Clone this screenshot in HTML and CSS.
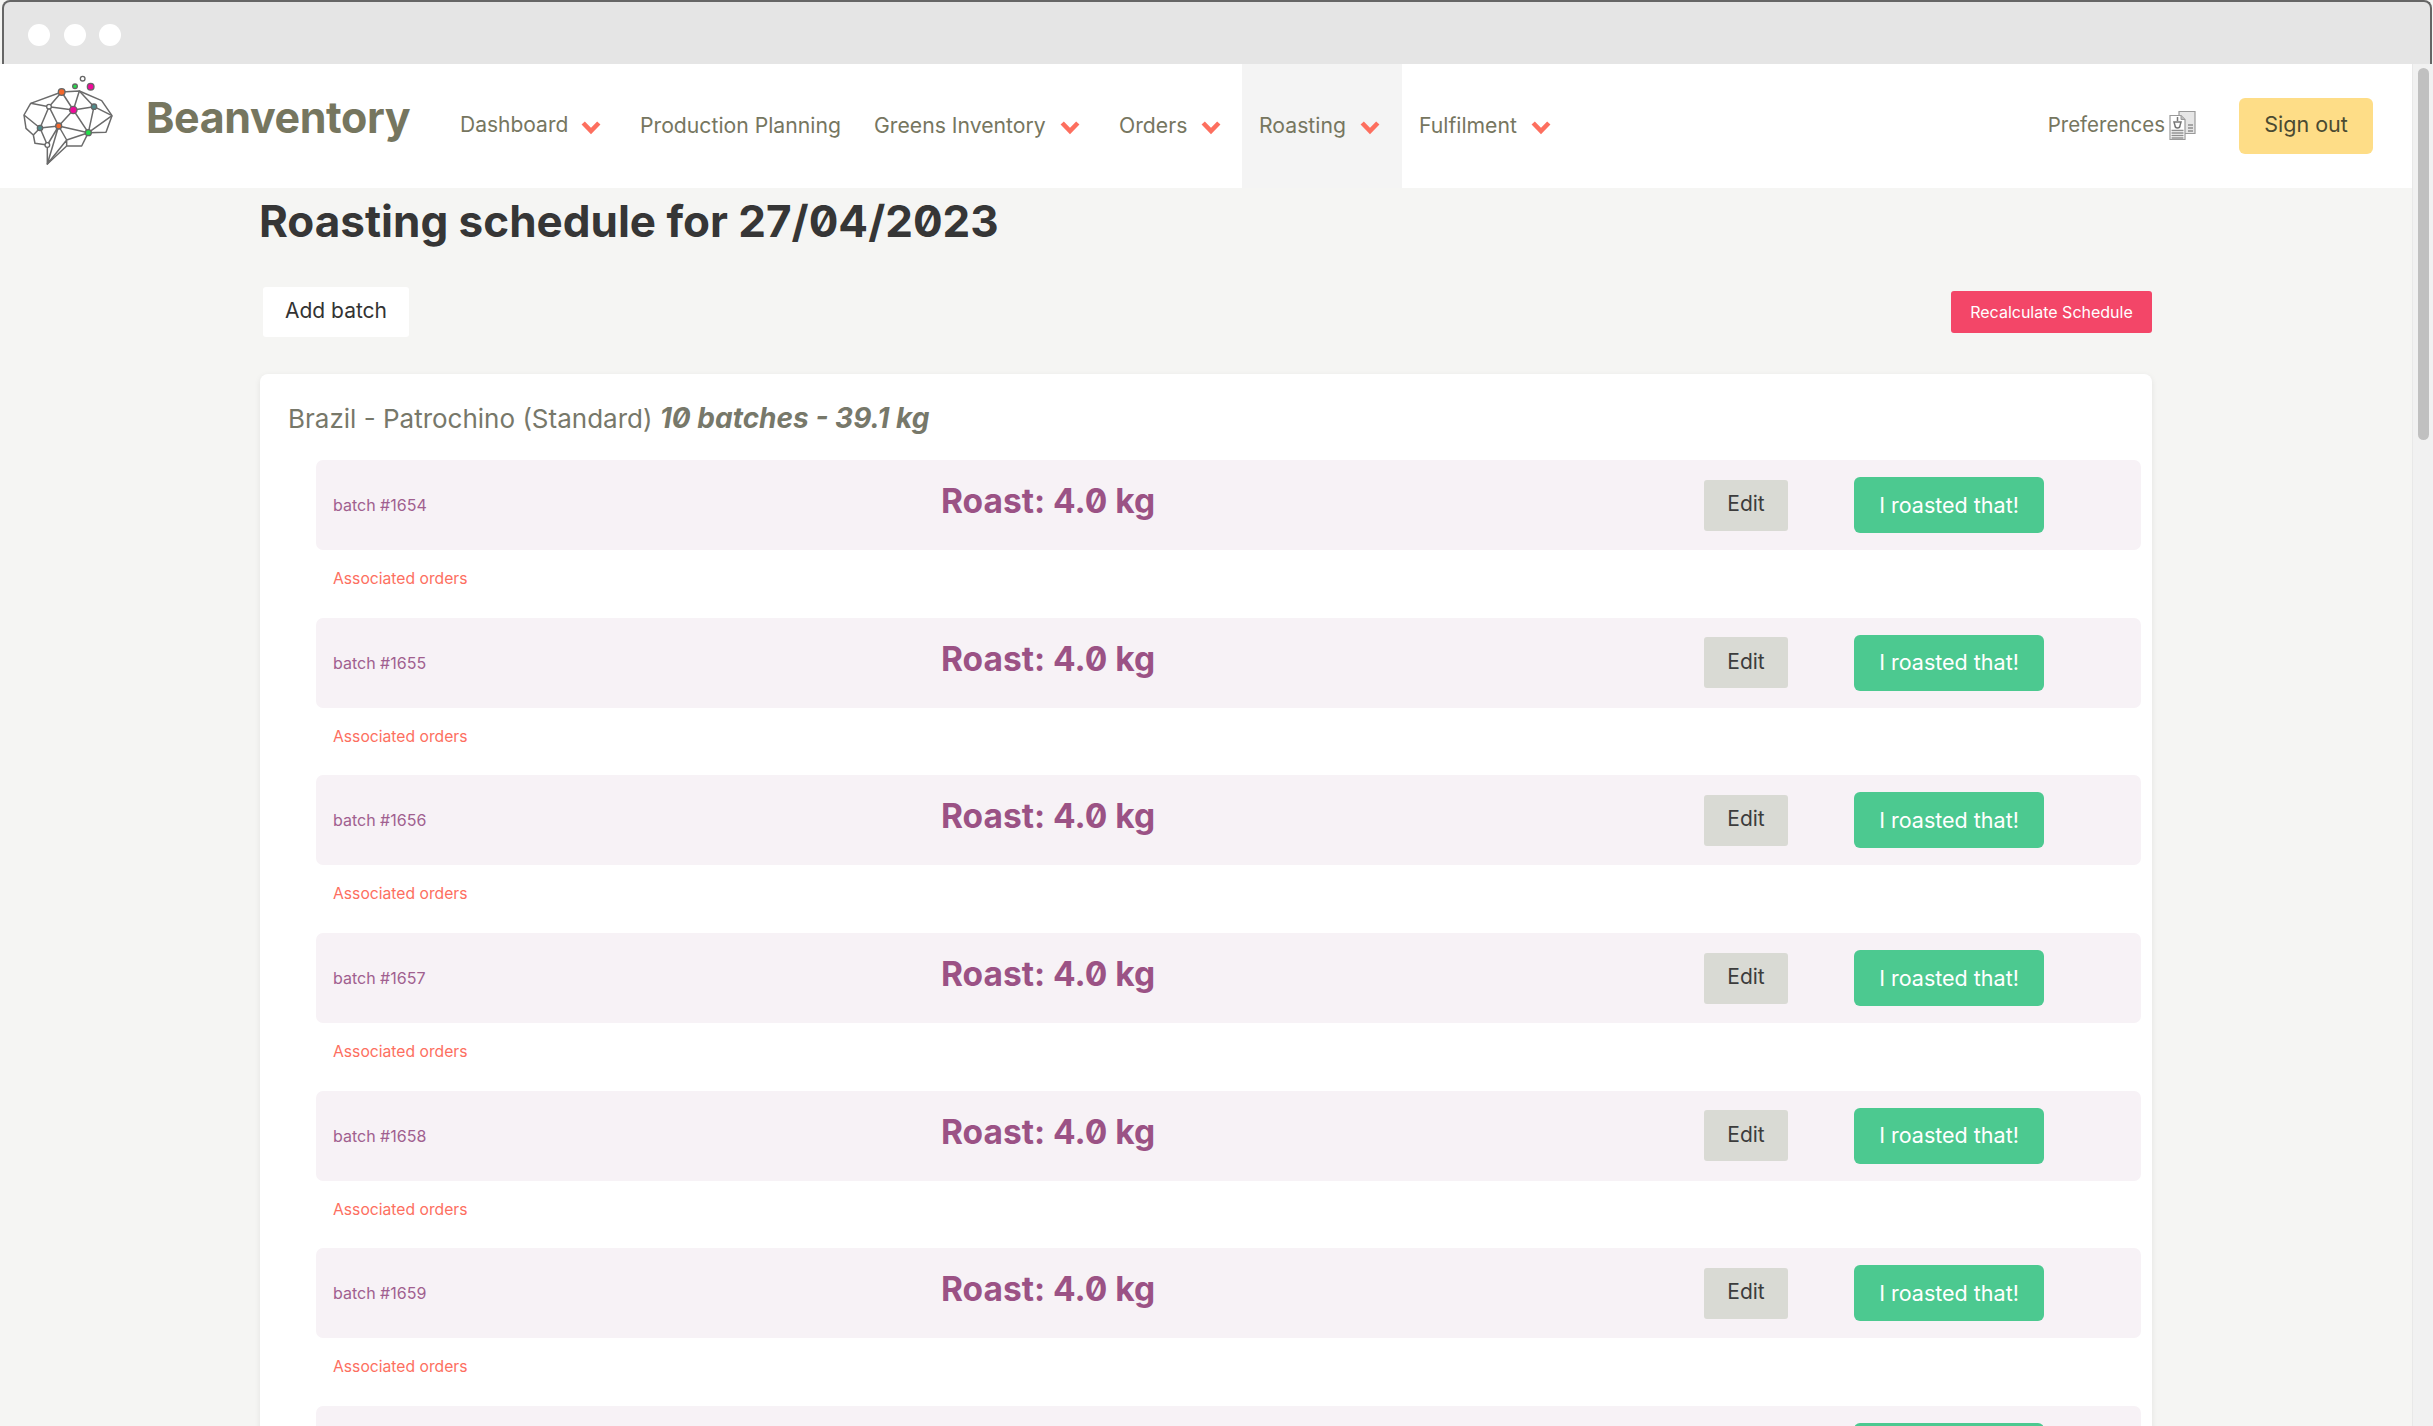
FILE: index.html
```html
<!DOCTYPE html>
<html lang="en">
<head>
<meta charset="utf-8">
<title>Beanventory</title>
<link rel="stylesheet" href="styles.css">
</head>
<body>
<svg class="defs" width="0" height="0" aria-hidden="true"><symbol id="chev" viewBox="0 0 20 15"><path d="M2.200 3 10 11 17.800 3" fill="none" stroke="#fd6f5f" stroke-width="4.600"/></symbol></svg>
<div class="chrome"><span class="dot"></span><span class="dot"></span><span class="dot"></span></div>
<div class="window">
  <div class="page">
    <nav class="nav">
      <a class="brand">
        <svg class="logo" viewBox="0 0 390 330" aria-hidden="true">
          <g fill="none" stroke="#6b6b6b" stroke-width="4.5" stroke-linejoin="round">
            <path d="M92 130 185 96 238 93 305 122 336 167 318 217 265 218 245 258 200 258 142 312 142 255 105 250 100 225 78 205 72 165Z"/>
            <path d="M185 96 147 140 92 130M147 140 220 150 282 140 238 93 220 150 185 96M147 140 120 204 72 165M147 140 176 198 220 150 265 218 282 140 336 167M120 204 176 198 265 218M120 204 100 225M120 204 142 255 176 198 142 312 200 240 265 218M176 198 200 240 200 258M265 218 336 167"/>
          </g>
          <g stroke="#666" stroke-width="4">
            <circle cx="185" cy="96" r="10" fill="#f4682c"/>
            <circle cx="147" cy="140" r="7" fill="#fff"/>
            <circle cx="220" cy="150" r="11" fill="#f0099a"/>
            <circle cx="282" cy="140" r="8" fill="#4f8c8c"/>
            <circle cx="120" cy="204" r="8" fill="#4f8c8c"/>
            <circle cx="176" cy="198" r="9" fill="#f4682c"/>
            <circle cx="265" cy="218" r="9" fill="#22e04a"/>
            <circle cx="142" cy="255" r="7" fill="#fff"/>
            <circle cx="225" cy="79" r="7" fill="#22e04a"/>
            <circle cx="272" cy="80" r="10" fill="#f0099a"/>
            <circle cx="248" cy="56" r="7" fill="#fff"/>
          </g>
        </svg>
        <span class="brand-name">Beanventory</span>
      </a>
      <div class="menu">
        <a class="item item-dashboard">Dashboard<svg class="chev"><use href="#chev"/></svg></a>
        <a class="item item-plan">Production Planning</a>
        <a class="item item-greens">Greens Inventory<svg class="chev"><use href="#chev"/></svg></a>
        <a class="item item-orders">Orders<svg class="chev"><use href="#chev"/></svg></a>
        <a class="item item-roast active">Roasting<svg class="chev"><use href="#chev"/></svg></a>
        <a class="item item-ful">Fulfilment<svg class="chev"><use href="#chev"/></svg></a>
      </div>
      <div class="nav-end">
        <a class="prefs">Preferences
          <svg class="prefs-icon" viewBox="0 0 27 30" aria-hidden="true">
            <path d="M10 1.500h16v22H10z" fill="#e6e6e6" stroke="#9a9a9a" stroke-width="1.200"/>
            <path d="M1 5.500h11l4 4v20H1z" fill="#fff" stroke="#9a9a9a" stroke-width="1.200"/>
            <path d="M12 5.500v4h4" fill="#bbb" stroke="#9a9a9a"/>
            <path d="M19 15h5M19 18h5M19 21h5M2.500 20.500h12M2.500 23h12M2.500 25.500h12M2.500 28h12" stroke="#8f8f8f" stroke-width="1.300"/>
            <path d="M5 12h7l-1 3.500a2.500 2.500 0 0 1-5 0ZM8.500 7v4" fill="none" stroke="#777" stroke-width="1.500"/>
          </svg>
        </a>
        <a class="btn signout">Sign out</a>
      </div>
    </nav>
    <main class="main">
      <h1 class="title">Roasting schedule for 27/04/2023</h1>
      <div class="toolbar">
        <a class="add">Add batch</a>
        <a class="recalc">Recalculate Schedule</a>
      </div>
      <section class="card">
        <h2 class="card-title">Brazil - Patrochino (Standard) <em>10 batches - 39.1 kg</em></h2>
        <div class="batch"><div class="row"><span class="num">batch #1654</span><strong class="roast">Roast: 4.0 kg</strong><a class="edit">Edit</a><a class="done">I roasted that!</a></div><a class="assoc">Associated orders</a></div>
        <div class="batch"><div class="row"><span class="num">batch #1655</span><strong class="roast">Roast: 4.0 kg</strong><a class="edit">Edit</a><a class="done">I roasted that!</a></div><a class="assoc">Associated orders</a></div>
        <div class="batch"><div class="row"><span class="num">batch #1656</span><strong class="roast">Roast: 4.0 kg</strong><a class="edit">Edit</a><a class="done">I roasted that!</a></div><a class="assoc">Associated orders</a></div>
        <div class="batch"><div class="row"><span class="num">batch #1657</span><strong class="roast">Roast: 4.0 kg</strong><a class="edit">Edit</a><a class="done">I roasted that!</a></div><a class="assoc">Associated orders</a></div>
        <div class="batch"><div class="row"><span class="num">batch #1658</span><strong class="roast">Roast: 4.0 kg</strong><a class="edit">Edit</a><a class="done">I roasted that!</a></div><a class="assoc">Associated orders</a></div>
        <div class="batch"><div class="row"><span class="num">batch #1659</span><strong class="roast">Roast: 4.0 kg</strong><a class="edit">Edit</a><a class="done">I roasted that!</a></div><a class="assoc">Associated orders</a></div>
        <div class="batch"><div class="row"><span class="spacer"></span><span class="spacer"></span><a class="edit"></a><a class="done"></a></div></div>
      </section>
    </main>
  </div>
  <div class="scrollbar"><div class="thumb"></div></div>
</div>
</body>
</html>
```
FILE: styles.css
```css
* { box-sizing: border-box; }
html, body { margin: 0; height: 1426px; overflow: hidden; }
body {
  font-family: Inter, "Liberation Sans", sans-serif;
  background: #f5f5f3;
  color: #333;
}
.defs { position: absolute; }
.chrome {
  height: 64px;
  margin: 0 1px 0 2px;
  background: #e5e5e5;
  border: 2px solid #666;
  border-bottom: 0;
  border-radius: 8px 8px 0 0;
  display: flex;
  align-items: center;
  gap: 13.500px;
  padding: 4px 0 0 24px;
}
.dot { width: 22px; height: 22px; border-radius: 50%; background: #fff; }
.window { display: flex; height: 1362px; overflow: hidden; }
.page { width: 2412px; flex: none; }
.scrollbar { flex: 1; background: #f1f1f1; border-left: 1px solid #e8e8e8; padding: 4px 4px 0 5px; }
.thumb { height: 372px; background: #c0c0c0; border-radius: 6px; }

.nav { height: 124px; background: #fff; display: flex; align-items: stretch; }
.brand { display: flex; align-items: center; width: 446px; flex: none; }
.logo { width: 130px; height: 110px; flex: none; margin: -22px 16px 0 0; }
.brand-name { font-size: 43px; font-weight: 700; color: #76765f; letter-spacing: -0.4px; margin-top: -18px; }
.menu { display: flex; align-items: stretch; }
.item { display: flex; align-items: center; font-size: 21.200px; color: #76765f; white-space: nowrap; padding-bottom: 3px; }
.chev { width: 20px; height: 15px; margin-left: 14px; margin-top: 6px; }
.item-dashboard { margin-left: 14px; width: 180px; font-size: 21px; }
.item-dashboard .chev { margin-left: 13px; }
.item-plan { width: 234px; }
.item-greens { width: 245px; }
.item-orders { width: 123px; }
.item-roast { width: 160px; padding-left: 17px; }
.item-ful { padding-left: 17px; }
.active { background: #f4f4f4; }
.nav-end { margin-left: auto; display: flex; align-items: center; padding-right: 39px; }
.prefs { display: flex; align-items: center; font-size: 20.500px; color: #76765f; margin-right: 43px; padding-bottom: 4px; }
.prefs-icon { width: 27px; height: 30px; margin-left: 4px; margin-top: 2px; }
.btn.signout {
  width: 134px; height: 56px; background: #fedd87; color: #4a4a32; border-radius: 6px;
  display: flex; align-items: center; justify-content: center; font-size: 21.500px; margin-top: -1px; padding-bottom: 3px;
}

.main { margin-left: 260px; width: 1892px; }
.title { margin: 0 0 0 -1px; height: 99px; padding-top: 7px; font-size: 44px; line-height: 52px; font-weight: 700; color: #363636; font-feature-settings: "zero"; white-space: nowrap; }
.toolbar { display: flex; justify-content: space-between; align-items: center; height: 50px; padding-left: 3px; }
.add { width: 146px; height: 50px; background: #fff; border-radius: 3px; display: flex; align-items: center; justify-content: center; font-size: 21px; color: #333; padding-bottom: 3px; }
.recalc { width: 201px; height: 42px; background: #f34668; color: #fff; border-radius: 3px; display: flex; align-items: center; justify-content: center; font-size: 16px; }
.card { margin-top: 37px; background: #fff; border-radius: 8px; padding: 26px 11px 0 28px; box-shadow: 0 2px 6px rgba(0,0,0,.08); height: 1100px; }
.card-title { margin: 0; height: 60px; font-size: 26px; line-height: 36px; font-weight: 400; color: #77786a; white-space: nowrap; }
.card-title em { font-size: 28px; font-weight: 700; font-style: italic; font-feature-settings: "zero"; }
.batch { margin-left: 28px; height: 157.700px; }
.row {
  height: 90px; background: #f7f2f6; border-radius: 7px;
  display: grid; grid-template-columns: 608px 1fr 84px 190px;
  align-items: center; padding: 0 97px 0 17px;
}
.num { font-size: 16px; color: #a0608f; }
.roast { font-size: 33.500px; line-height: 40px; font-weight: 700; color: #9b5285; font-feature-settings: "zero"; margin-top: -8px; white-space: nowrap; }
.edit { width: 84px; height: 51px; background: #d9dad4; border-radius: 3px; display: flex; align-items: center; justify-content: center; font-size: 21px; color: #3c3c3c; padding-bottom: 3px; grid-column: 3; margin-left: -66px; }
.done { width: 190px; height: 56px; background: #4cc990; color: #fff; border-radius: 6px; display: flex; align-items: center; justify-content: center; font-size: 21.500px; grid-column: 4; padding-bottom: 1px; }
.assoc { display: block; margin: 19px 0 0 17px; font-size: 15.700px; line-height: 20px; color: #fd6f5f; }
```
